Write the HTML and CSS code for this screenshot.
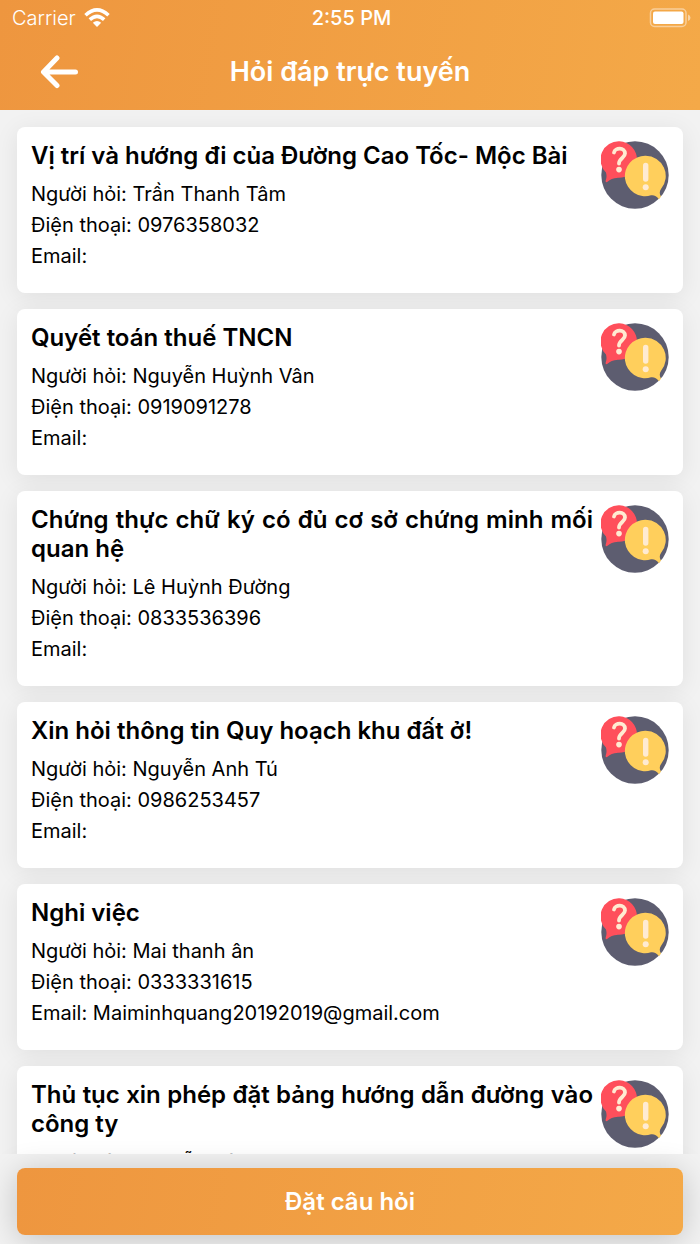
FILE: index.html
```html
<!DOCTYPE html>
<html lang="vi">
<head>
<meta charset="utf-8">
<meta name="viewport" content="width=device-width, initial-scale=1">
<title>Hỏi đáp trực tuyến</title>
<link rel="stylesheet" href="styles.css">
</head>
<body>
<svg class="sprite" aria-hidden="true">
  <symbol id="qa" viewBox="0 0 68 68">
    <circle cx="34" cy="34" r="33.700" fill="#5d5d70"/>
    <path d="M18.500 0.300A18.200 18.200 0 1 1 17 36.800C12 37 9 38.500 6.500 40.800Q4.300 42 4.700 39.500Q6.200 36 5 31.500A18.200 18.200 0 0 1 18.500 .300Z" fill="#ff4f5b"/>
    <path d="M13 11.500C14 6.500 24 6 24 12.500C24 17 18 17 18 22.500" fill="none" stroke="#ffebd2" stroke-width="3.800" stroke-linecap="round"/>
    <circle cx="18" cy="28.600" r="2.800" fill="#ffebd2"/>
    <path d="M44.700 14.800A20.200 20.200 0 0 1 60 48Q57.500 51.500 60 55.500L58 58.300Q54.500 53.600 50 54.300A20.200 20.200 0 1 1 44.700 14.800Z" fill="#ffcf5c"/>
    <path d="M44.700 24.500V38" fill="none" stroke="#ffebd2" stroke-width="5.400" stroke-linecap="round"/>
    <circle cx="44.700" cy="46.300" r="3" fill="#ffebd2"/>
  </symbol>
</svg>
<div class="app">
  <header class="header">
    <div class="status">
      <div class="carrier">
        <span>Carrier</span>
        <svg class="wifi" viewBox="0 0 26 20" aria-hidden="true">
          <g fill="none" stroke="#fff" stroke-width="3.600">
            <path d="M1.500 7.200Q13-3.400 24.500 7.200"/>
            <path d="M5.800 11.700Q13 5.200 20.200 11.700"/>
          </g>
          <path d="M8.800 14.800Q13 11.200 17.200 14.800L13 19Z" fill="#fff"/>
        </svg>
      </div>
      <span class="time">2:55 PM</span>
      <svg class="battery" viewBox="0 0 42 20" aria-hidden="true">
        <rect x="1.500" y="1" width="35.500" height="17.500" rx="4" fill="none" stroke="#fff" stroke-opacity=".45" stroke-width="1.500"/>
        <rect x="4" y="3.500" width="30.500" height="12.500" rx="2" fill="#fff"/>
        <path d="M39 6.500Q41.500 7.500 41.500 9.700Q41.500 12 39 13Z" fill="#fff" fill-opacity=".5"/>
      </svg>
    </div>
    <div class="nav">
      <button class="back" type="button" aria-label="Quay lại">
        <svg viewBox="0 0 38 34" aria-hidden="true"><path d="M35.500 17H4M17 3L3.500 17L17 30.500" fill="none" stroke="#fff" stroke-width="5" stroke-linecap="round" stroke-linejoin="round"/></svg>
      </button>
      <h1 class="heading">Hỏi đáp trực tuyến</h1>
    </div>
  </header>
  <main class="list">
    <article class="card">
      <div class="content">
        <h2 class="title">Vị trí và hướng đi của Đường Cao Tốc- Mộc Bài</h2>
        <p class="line">Người hỏi: Trần Thanh Tâm</p>
        <p class="line">Điện thoại: 0976358032</p>
        <p class="line">Email:</p>
      </div>
      <svg class="icon" aria-hidden="true"><use href="#qa"/></svg>
    </article>
    <article class="card">
      <div class="content">
        <h2 class="title">Quyết toán thuế TNCN</h2>
        <p class="line">Người hỏi: Nguyễn Huỳnh Vân</p>
        <p class="line">Điện thoại: 0919091278</p>
        <p class="line">Email:</p>
      </div>
      <svg class="icon" aria-hidden="true"><use href="#qa"/></svg>
    </article>
    <article class="card">
      <div class="content">
        <h2 class="title">Chứng thực chữ ký có đủ cơ sở chứng minh mối quan hệ</h2>
        <p class="line">Người hỏi: Lê Huỳnh Đường</p>
        <p class="line">Điện thoại: 0833536396</p>
        <p class="line">Email:</p>
      </div>
      <svg class="icon" aria-hidden="true"><use href="#qa"/></svg>
    </article>
    <article class="card">
      <div class="content">
        <h2 class="title">Xin hỏi thông tin Quy hoạch khu đất ở!</h2>
        <p class="line">Người hỏi: Nguyễn Anh Tú</p>
        <p class="line">Điện thoại: 0986253457</p>
        <p class="line">Email:</p>
      </div>
      <svg class="icon" aria-hidden="true"><use href="#qa"/></svg>
    </article>
    <article class="card">
      <div class="content">
        <h2 class="title">Nghỉ việc</h2>
        <p class="line">Người hỏi: Mai thanh ân</p>
        <p class="line">Điện thoại: 0333331615</p>
        <p class="line">Email: Maiminhquang20192019@gmail.com</p>
      </div>
      <svg class="icon" aria-hidden="true"><use href="#qa"/></svg>
    </article>
    <article class="card">
      <div class="content">
        <h2 class="title">Thủ tục xin phép đặt bảng hướng dẫn đường vào công ty</h2>
        <p class="line">Người hỏi: Nguyễn Hải</p>
      </div>
      <svg class="icon" aria-hidden="true"><use href="#qa"/></svg>
    </article>
  </main>
  <footer class="footer">
    <button class="ask" type="button">Đặt câu hỏi</button>
  </footer>
</div>
</body>
</html>
```

FILE: styles.css
```css
* {
  box-sizing: border-box;
}

body {
  margin: 0;
  background: #f2f2f2;
  color: #000;
  font-family: Inter, "Liberation Sans", sans-serif;
}

.sprite {
  display: none;
}

.app {
  display: flex;
  flex-direction: column;
  height: 100vh;
}

.header {
  flex: none;
  background: linear-gradient(100deg, #ee963f, #f4a948);
  color: #fff;
}

.status {
  display: grid;
  grid-template-columns: 1fr auto 1fr;
  align-items: center;
  height: 36px;
  padding: 0 9px 0 12px;
  font-size: 20px;
}

.carrier {
  display: flex;
  align-items: center;
  gap: 8px;
  font-weight: 300;
}

.wifi {
  width: 26px;
  height: 20px;
}

.time {
  font-weight: 500;
}

.battery {
  justify-self: end;
  width: 42px;
  height: 20px;
}

.nav {
  display: grid;
  grid-template-columns: 80px 1fr 80px;
  align-items: center;
  height: 74px;
  padding-bottom: 2px;
}

.back {
  display: flex;
  justify-content: flex-end;
  padding: 0 2px 0 0;
  border: 0;
  background: none;
}

.back svg {
  width: 38px;
  height: 34px;
}

.heading {
  margin: 0;
  font-size: 27px;
  font-weight: 600;
  line-height: 32px;
  text-align: center;
}

.list {
  display: flex;
  flex: 1;
  flex-direction: column;
  gap: 16px;
  min-height: 0;
  padding: 17px;
  overflow: hidden;
}

.card {
  display: flex;
  flex: none;
  align-items: flex-start;
  gap: 8px;
  padding: 14px 14px 21px;
  border-radius: 8px;
  background: #fff;
  box-shadow: 0 4px 24px rgba(0, 0, 0, .08);
}

.content {
  flex: 1;
  min-width: 0;
}

.title {
  margin: 0 0 9px;
  font-size: 24px;
  font-weight: 600;
  line-height: 29px;
  text-align: justify;
}

.line {
  margin: 0;
  font-size: 20px;
  line-height: 31px;
}

.icon {
  flex: none;
  width: 68px;
  height: 68px;
}

.footer {
  flex: none;
  padding: 14px 17px 9px;
}

.ask {
  display: block;
  width: 100%;
  height: 67px;
  padding: 0;
  border: 0;
  border-radius: 8px;
  background: linear-gradient(100deg, #ee963f, #f4a948);
  box-shadow: 0 4px 32px rgba(0, 0, 0, .2);
  color: #fff;
  font: 600 24px/29px Inter, "Liberation Sans", sans-serif;
}
```
